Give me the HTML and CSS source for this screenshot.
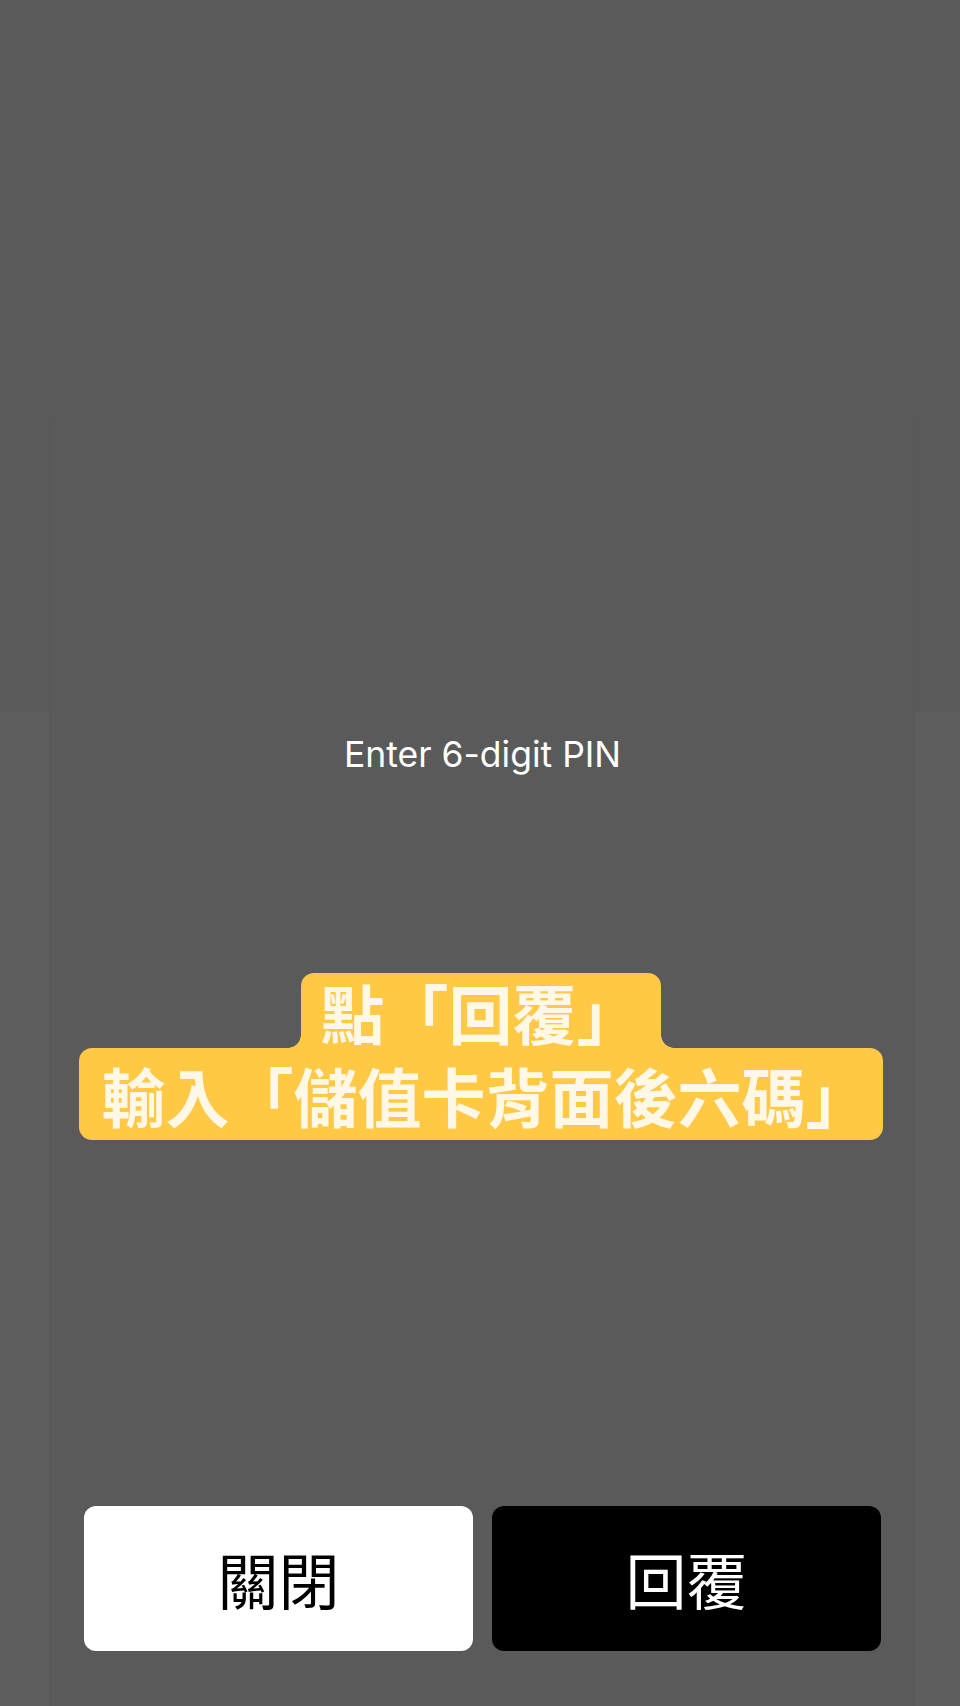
FILE: index.html
```html
<!DOCTYPE html>
<html lang="zh-Hant">
<head>
<meta charset="utf-8">
<title>Enter PIN</title>
<link rel="stylesheet" href="styles.css">
</head>
<body>
<div class="screen">
  <div class="backdrop"></div>
  <div class="stage">
    <div class="gutter gutter-left"></div>
    <div class="panel">
      <div class="pin-label">Enter 6-digit PIN</div>
      <div class="caption">
        <div class="cap-line cap-top">點「回覆」</div>
        <div class="cap-line cap-bottom">輸入「儲值卡背面後六碼」</div>
      </div>
      <div class="actions">
        <button class="btn btn-close">關閉</button>
        <button class="btn btn-reply">回覆</button>
      </div>
    </div>
    <div class="gutter gutter-right"></div>
  </div>
</div>
</body>
</html>
```

FILE: styles.css
```css
* { box-sizing: border-box; }

html, body {
  margin: 0;
  padding: 0;
  background: #5a5a5a;
}

.screen {
  width: 960px;
  height: 1706px;
  display: flex;
  flex-direction: column;
  overflow: hidden;
}

.backdrop {
  height: 420px;
  flex: none;
}

.stage {
  flex: 1;
  display: grid;
  grid-template-columns: 49px minmax(0, 1fr) 45px;
}

.gutter {
  background: linear-gradient(to bottom, #5a5a5a 0, #5a5a5a 292px, #5e5e5e 292px, #5e5e5e 100%);
}

.panel {
  display: flex;
  flex-direction: column;
  align-items: center;
  background: #5a5a5a;
  border-left: 1px solid #575757;
  border-right: 1px solid #575757;
  padding: 0 33px 55px 34px;
}

.pin-label {
  margin-top: 315px;
  height: 40px;
  line-height: 40px;
  font-family: Inter, "Noto Sans", sans-serif;
  font-size: 35.5px;
  color: #ffffff;
}

.caption {
  margin-top: 198px;
  margin-right: 4px;
  display: flex;
  flex-direction: column;
  align-items: center;
  font-family: "Noto Sans CJK TC", "Noto Sans CJK SC", sans-serif;
  font-weight: 700;
  font-size: 64px;
  color: #fff8e6;
}

.cap-line {
  display: flex;
  align-items: center;
  justify-content: center;
  background: #ffc845;
  white-space: nowrap;
  line-height: 1;
}

.cap-top {
  position: relative;
  height: 75px;
  padding: 0 20px;
  border-radius: 13px 13px 0 0;
}

.cap-top::before,
.cap-top::after {
  content: "";
  position: absolute;
  bottom: 0;
  width: 13px;
  height: 13px;
}

.cap-top::before {
  left: -13px;
  background: radial-gradient(circle at 0 0, transparent 12.5px, #ffc845 13px);
}

.cap-top::after {
  right: -13px;
  background: radial-gradient(circle at 100% 0, transparent 12.5px, #ffc845 13px);
}

.cap-bottom {
  height: 92px;
  padding: 0 13px 0 23px;
  border-radius: 13px;
}

.actions {
  margin-top: auto;
  width: 100%;
  display: grid;
  grid-template-columns: 1fr 1fr;
  gap: 19px;
}

.btn {
  height: 145px;
  border: none;
  border-radius: 12px;
  font-family: "Noto Sans CJK TC", "Noto Sans CJK SC", sans-serif;
  font-size: 61px;
  font-weight: 400;
  padding: 0;
  display: flex;
  align-items: center;
  justify-content: center;
}

.btn-close {
  background: #ffffff;
  color: #000000;
}

.btn-reply {
  background: #000000;
  color: #ffffff;
}
```
